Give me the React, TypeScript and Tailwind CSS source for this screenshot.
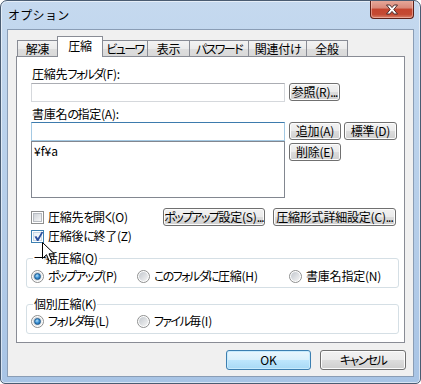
import React from "react";

function T({ s }: { s: string }) {
  const parts = s.match(/[\u3040-\u30ff]+|\.+|[^\u3040-\u30ff.]+/g) || [];
  return (
    <>
      {parts.map((p, i) =>
        /[\u3040-\u30ff]/.test(p) ? (
          <span key={i} className="tracking-[-1.6px]">
            {p}
          </span>
        ) : /^\.+$/.test(p) ? (
          <span key={i} className="tracking-[-1px]">
            {p}
          </span>
        ) : (
          <span key={i} className="tracking-[-0.2px]">{p}</span>
        )
      )}
    </>
  );
}

function Btn({ className, s }: { className: string; s: string }) {
  return (
    <div
      className={
        "flex items-center justify-center rounded-[3px] border border-[#707070] bg-[linear-gradient(to_bottom,#f2f2f2_0%,#ebebeb_50%,#dddddd_50%,#cfcfcf_100%)] shadow-[inset_0_0_0_1px_#fcfcfc] whitespace-nowrap " +
        className
      }
    >
      <T s={s} />
    </div>
  );
}

function Check({ checked }: { checked?: boolean }) {
  return (
    <span
      className={
        "relative flex w-[13px] h-[13px] shrink-0 items-center justify-center border bg-white " +
        (checked ? "border-[#3c7fb1]" : "border-[#8e8f8f]")
      }
    >
      <span
        className={
          "w-[9px] h-[9px] border " +
          (checked
            ? "border-[#c5d6e6] bg-[linear-gradient(135deg,#e6eef6,#ffffff)]"
            : "border-[#b8bcc2] bg-[linear-gradient(135deg,#cfd3d8,#f7f7f7)]")
        }
      />
      {checked && (
        <svg className="absolute left-[1px] top-[0px]" width="11" height="11" viewBox="0 0 11 11">
          <polygon points="1.5,5.5 3.6,5.2 4.8,7.2 8.6,0.8 10.2,1.2 5.4,10 4,10" fill="#2c4f9e" />
        </svg>
      )}
    </span>
  );
}

function Radio({ on }: { on?: boolean }) {
  return (
    <span className="flex w-[13px] h-[13px] shrink-0 items-center justify-center rounded-full border border-[#8e8f8f] bg-white">
      <span className="flex w-[9px] h-[9px] items-center justify-center rounded-full bg-[linear-gradient(135deg,#c3c8ce,#f4f4f4)]">
        {on && (
          <span className="w-[7px] h-[7px] rounded-full border border-[#1d5b8f] bg-[radial-gradient(circle_at_40%_35%,#b7e3fb_0%,#3f94d6_45%,#125597_100%)]" />
        )}
      </span>
    </span>
  );
}

function Tab({ className, s, active }: { className: string; s: string; active?: boolean }) {
  return (
    <div
      className={
        "flex items-center justify-center border border-b-0 border-[#898c95] whitespace-nowrap " +
        (active
          ? "relative z-10 h-[21px] mb-[-1px] bg-white pb-[3px] "
          : "h-[16px] pt-[1px] bg-[linear-gradient(to_bottom,#f3f3f3_0%,#ebebeb_50%,#dedede_50%,#d9d9d9_100%)] ") +
        className
      }
    >
      <T s={s} />
    </div>
  );
}

function Label({ s }: { s: string }) {
  return (
    <span className="whitespace-nowrap">
      <T s={s} />
    </span>
  );
}

export default function App() {
  return (
    <div className="relative flex w-[421px] h-[384px] flex-col overflow-hidden rounded-t-[7px] rounded-b-[5px] border border-[#4a5c72] bg-[linear-gradient(to_bottom,#c5d9ef_0%,#bcd3ec_30%,#b2cbe8_70%,#a8c4e5_100%)] shadow-[inset_0_0_0_1px_rgba(255,255,255,0.55)] font-['Noto_Sans_CJK_JP',sans-serif] text-[12px] leading-[14px] text-black">
      {/* title bar */}
      <div className="flex h-[28px] shrink-0 items-start justify-between">
        <div className="pl-[7px] pt-[7px] text-[12px] leading-[14px] tracking-[0.3px]">オプション</div>
        <div className="-mt-px mr-[6px] flex w-[44px] h-[19px] items-center justify-center rounded-b-[4px] border border-t-0 border-[#5e2119] bg-[linear-gradient(to_bottom,#e8ab9d_0%,#d98878_45%,#c5452f_50%,#c44a33_80%,#d8816a_100%)] shadow-[inset_0_0_0_1px_rgba(255,210,200,0.5)]">
          <svg width="14" height="11" viewBox="0 0 14 11">
            <path d="M1.5 1 L4.8 1 L7 3.6 L9.2 1 L12.5 1 L8.8 5.5 L12.5 10 L9.2 10 L7 7.4 L4.8 10 L1.5 10 L5.2 5.5 Z" fill="#ffffff" stroke="#4a2a2a" strokeWidth="1" strokeLinejoin="round" />
          </svg>
        </div>
      </div>

      {/* client */}
      <div className="mx-[6px] flex h-[348px] shrink-0 flex-col border border-[#8a9db5] bg-[#f0f0f0] px-[8px] pt-[6px] [font-feature-settings:'palt']">
        {/* tabs */}
        <div className="flex h-[20px] items-end pl-[1px]">
          <Tab className="w-[41px]" s="解凍" />
          <Tab className="w-[46px] -ml-px" s="圧縮" active />
          <Tab className="w-[46px] -ml-px" s="ビューワ" />
          <Tab className="w-[43px] -ml-px" s="表示" />
          <Tab className="w-[60px] -ml-px" s="パスワード" />
          <Tab className="w-[59px] -ml-px" s="関連付け" />
          <Tab className="w-[42px] -ml-px" s="全般" />
        </div>

        {/* panel */}
        <div className="flex h-[287px] w-full flex-col border border-[#898c95] bg-white pt-[10px]">
          <div className="ml-[15px] h-[14px]">
            <Label s="圧縮先フォルダ(F):" />
          </div>
          <div className="mt-[2px] ml-[14px] flex items-start gap-[4px]">
            <div className="w-[254px] h-[19px] border border-[#d5d8dc] border-t-[#abadb3]" />
            <Btn className="w-[51px] h-[18px]" s="参照(R)..." />
          </div>

          <div className="mt-[5px] ml-[15px] h-[14px]">
            <Label s="書庫名の指定(A):" />
          </div>
          <div className="mt-[1px] ml-[14px] flex items-start gap-[4px]">
            <div className="flex w-[254px] flex-col">
              <div className="h-[19px] border border-[#a4c9e3] border-t-[#3d7bad]" />
              <div className="h-[57px] border border-[#828790] pl-[2px] pt-[2px]">¥f¥a</div>
            </div>
            <div className="flex flex-col">
              <div className="flex gap-[3px]">
                <Btn className="w-[52px] h-[18px]" s="追加(A)" />
                <Btn className="w-[53px] h-[18px]" s="標準(D)" />
              </div>
              <Btn className="mt-[3px] w-[52px] h-[18px]" s="削除(E)" />
            </div>
          </div>

          <div className="mt-[10px] ml-[14px] flex h-[18px] items-center">
            <div className="flex w-[132px] items-center gap-[4px]">
              <Check />
              <Label s="圧縮先を開く(O)" />
            </div>
            <Btn className="w-[102px] h-[18px]" s="ポップアップ設定(S)..." />
            <Btn className="ml-[8px] w-[123px] h-[18px]" s="圧縮形式詳細設定(C)..." />
          </div>
          <div className="mt-[3px] ml-[14px] flex h-[14px] items-center gap-[4px]">
            <Check checked />
            <Label s="圧縮後に終了(Z)" />
          </div>

          {/* group 1 */}
          <div className="mt-[15px] ml-[9px] flex w-[373px] flex-col rounded-[3px] border border-[#d5dfe5] pb-[4px]">
            <div className="-mt-[8px] ml-[6px] h-[14px] w-fit bg-white px-[1px]">
              <Label s="一括圧縮(Q)" />
            </div>
            <div className="mt-[4px] ml-[4px] flex h-[14px] items-center">
              <div className="flex w-[106px] items-center gap-[4px]">
                <Radio on />
                <Label s="ポップアップ(P)" />
              </div>
              <div className="flex w-[152px] items-center gap-[4px]">
                <Radio />
                <Label s="このフォルダに圧縮(H)" />
              </div>
              <div className="flex items-center gap-[4px]">
                <Radio />
                <Label s="書庫名指定(N)" />
              </div>
            </div>
          </div>

          {/* group 2 */}
          <div className="mt-[16px] ml-[9px] flex w-[373px] flex-col rounded-[3px] border border-[#d5dfe5] pb-[5px]">
            <div className="-mt-[8px] ml-[6px] h-[14px] w-fit bg-white px-[1px]">
              <Label s="個別圧縮(K)" />
            </div>
            <div className="mt-[3px] ml-[4px] flex h-[14px] items-center">
              <div className="flex w-[106px] items-center gap-[4px]">
                <Radio on />
                <Label s="フォルダ毎(L)" />
              </div>
              <div className="flex items-center gap-[4px]">
                <Radio />
                <Label s="ファイル毎(I)" />
              </div>
            </div>
          </div>
        </div>

        {/* bottom buttons */}
        <div className="mt-[7px] -mr-px flex justify-end gap-[9px]">
          <div className="flex w-[85px] h-[20px] items-center justify-center rounded-[3px] border border-[#3c7fb1] bg-[linear-gradient(to_bottom,#eaf6fd_0%,#d9f0fc_50%,#bee6fd_50%,#a7d9f5_100%)] shadow-[inset_0_0_0_1px_#c8ebfd]">
            OK
          </div>
          <Btn className="w-[86px] h-[20px]" s="キャンセル" />
        </div>
      </div>

      {/* mouse cursor */}
      <svg className="absolute left-[41px] top-[241px]" width="16" height="22" viewBox="0 0 16 22">
        <path d="M2.5 2.5 V18.5 L6.5 14.7 L9.2 21 L11.6 20 L9 13.8 H14.3 Z" fill="rgba(0,0,0,0.25)" />
        <path d="M0.5 0.5 V16.5 L4.5 12.7 L7.2 19 L9.6 18 L7 11.8 H12.3 Z" fill="#ffffff" stroke="#000000" strokeWidth="1" strokeLinejoin="round" />
      </svg>
    </div>
  );
}
